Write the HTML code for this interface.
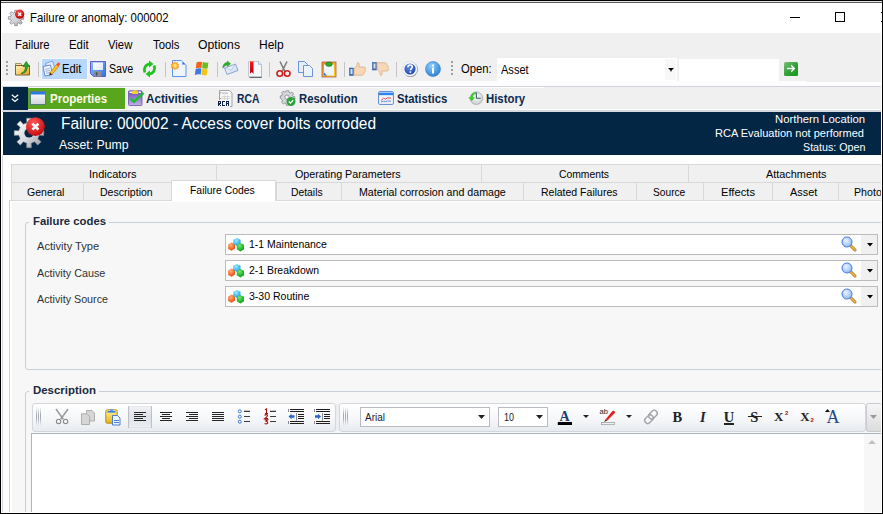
<!DOCTYPE html>
<html><head><meta charset="utf-8"><style>
html,body{margin:0;padding:0;}
body{width:883px;height:514px;position:relative;overflow:hidden;background:#fff;font-family:"Liberation Sans",sans-serif;}
.t{position:absolute;white-space:nowrap;}
svg{position:absolute;overflow:visible;}
</style></head><body>
<div style="position:absolute;left:0px;top:0px;width:883px;height:514px;background:#fff"></div>
<div style="position:absolute;left:0px;top:0px;width:883px;height:1px;background:#000"></div>
<div style="position:absolute;left:0px;top:1px;width:883px;height:1px;background:#e4e4e4"></div>
<div style="position:absolute;left:0px;top:2px;width:883px;height:1px;background:#5a5a5a"></div>
<svg style="left:7.5px;top:9.5px" width="17" height="16" viewBox="0 0 17 16">
<defs><linearGradient id="gg1" x1="0" y1="0" x2="1" y2="1"><stop offset="0" stop-color="#e4e6ec"/><stop offset="0.6" stop-color="#d0d2d8"/><stop offset="1" stop-color="#9a9ca2"/></linearGradient>
<radialGradient id="rr1" cx="0.4" cy="0.3" r="0.7"><stop offset="0" stop-color="#ff5050"/><stop offset="1" stop-color="#c00000"/></radialGradient></defs>
<path d="M6.74 2.54L6.72 0.31L9.28 0.31L9.26 2.54L10.96 3.25L12.54 1.65L14.35 3.46L12.75 5.04L13.46 6.74L15.69 6.72L15.69 9.28L13.46 9.26L12.75 10.96L14.35 12.54L12.54 14.35L10.96 12.75L9.26 13.46L9.28 15.69L6.72 15.69L6.74 13.46L5.04 12.75L3.46 14.35L1.65 12.54L3.25 10.96L2.54 9.26L0.31 9.28L0.31 6.72L2.54 6.74L3.25 5.04L1.65 3.46L3.46 1.65L5.04 3.25z" fill="url(#gg1)" stroke="#6a6c72" stroke-width="0.6"/>
<circle cx="11.7" cy="4.2" r="4.6" fill="url(#rr1)"/>
<path d="M10.2 2.7l3 3M13.2 2.7l-3 3" stroke="#fff" stroke-width="1.4"/>
</svg>
<div class="t" style="left:29.60px;top:11px;font-size:12.50px;line-height:14.37px;transform:scaleX(0.9109);transform-origin:0 0;color:#000;">Failure or anomaly: 000002</div>
<div style="position:absolute;left:790px;top:17px;width:10px;height:1px;background:#000"></div>
<div style="position:absolute;left:835px;top:12px;width:10px;height:10px;box-sizing:border-box;border:1px solid #000"></div>
<div style="position:absolute;left:2px;top:33px;width:880px;height:48px;background:#f0f0f0"></div>
<div class="t" style="left:15.40px;top:38px;font-size:12.50px;line-height:14.37px;transform:scaleX(0.9058);transform-origin:0 0;color:#000;">Failure</div>
<div class="t" style="left:69.30px;top:38px;font-size:12.50px;line-height:14.37px;transform:scaleX(0.9095);transform-origin:0 0;color:#000;">Edit</div>
<div class="t" style="left:108.40px;top:38px;font-size:12.50px;line-height:14.37px;transform:scaleX(0.9054);transform-origin:0 0;color:#000;">View</div>
<div class="t" style="left:152.50px;top:38px;font-size:12.50px;line-height:14.37px;transform:scaleX(0.9041);transform-origin:0 0;color:#000;">Tools</div>
<div class="t" style="left:198.00px;top:38px;font-size:12.50px;line-height:14.37px;transform:scaleX(0.9745);transform-origin:0 0;color:#000;">Options</div>
<div class="t" style="left:259.10px;top:38px;font-size:12.50px;line-height:14.37px;transform:scaleX(0.9611);transform-origin:0 0;color:#000;">Help</div>
<div style="position:absolute;left:2px;top:81px;width:880px;height:5px;background:#fdfdfd"></div>
<div style="position:absolute;left:2px;top:86px;width:880px;height:1px;background:#cfd4da"></div>
<div style="position:absolute;left:806px;top:81px;width:76px;height:0px;"></div>
<div style="position:absolute;left:6px;top:61px;width:2px;height:2px;background:#a0a0a0"></div>
<div style="position:absolute;left:6px;top:65px;width:2px;height:2px;background:#a0a0a0"></div>
<div style="position:absolute;left:6px;top:69px;width:2px;height:2px;background:#a0a0a0"></div>
<div style="position:absolute;left:6px;top:73px;width:2px;height:2px;background:#a0a0a0"></div>
<div style="position:absolute;left:451px;top:61px;width:2px;height:2px;background:#a0a0a0"></div>
<div style="position:absolute;left:451px;top:65px;width:2px;height:2px;background:#a0a0a0"></div>
<div style="position:absolute;left:451px;top:69px;width:2px;height:2px;background:#a0a0a0"></div>
<div style="position:absolute;left:451px;top:73px;width:2px;height:2px;background:#a0a0a0"></div>
<div style="position:absolute;left:38px;top:62px;width:1px;height:15px;background:#c4c4c4"></div>
<div style="position:absolute;left:165px;top:62px;width:1px;height:15px;background:#c4c4c4"></div>
<div style="position:absolute;left:217px;top:62px;width:1px;height:15px;background:#c4c4c4"></div>
<div style="position:absolute;left:269px;top:62px;width:1px;height:15px;background:#c4c4c4"></div>
<div style="position:absolute;left:344px;top:62px;width:1px;height:15px;background:#c4c4c4"></div>
<div style="position:absolute;left:396px;top:62px;width:1px;height:15px;background:#c4c4c4"></div>
<svg style="left:14px;top:60px" width="17" height="17" viewBox="0 0 17 17">
<defs><linearGradient id="fy" x1="0" y1="0" x2="1" y2="1"><stop offset="0" stop-color="#fff4c0"/><stop offset="0.5" stop-color="#f6d070"/><stop offset="1" stop-color="#e49a20"/></linearGradient></defs>
<path d="M1.5 3.5h5.5l1 1.5v1h-6.5z" fill="#f4e4a8" stroke="#8a7040" stroke-width="0.7"/>
<path d="M1.5 5.5h14v9.5h-14z" fill="url(#fy)" stroke="#5a4420" stroke-width="0.8"/>
<path d="M7 13.5C10 12.5 11.5 10 11.5 6.5H9L12.2 1.5 15.5 6.5H13.3C13.3 11 11.5 13.5 7 13.5z" fill="#26a826" stroke="#0f6a12" stroke-width="0.6"/>
</svg>
<div style="position:absolute;left:41px;top:58px;width:47px;height:22px;box-sizing:border-box;background:#b9d8fb;border:1px solid #f4f8fc"></div>
<svg style="left:42px;top:60px" width="18" height="17" viewBox="0 0 18 17">
<path d="M3.5 3.5l7-2.5 3 9-7 2.5z" fill="#e4ecf9" stroke="#6c8fd0" stroke-width="0.8"/>
<path d="M1 6.5l7.5-1.5 2 9.5L3 16z" fill="#f2f6fd" stroke="#5a80c8" stroke-width="0.9"/>
<path d="M3.2 9.3l4.5-.9M3.6 11.3l4.5-.9M4 13.3l4.5-.9" stroke="#8aa6d8" stroke-width="0.9"/>
<path d="M8 12.5l6.8-8.3 2.2 1.9-6.8 8.2-2.7.9z" fill="#f6c21a" stroke="#b07810" stroke-width="0.6"/>
<path d="M14.3 4.8l1.5-1.8c.6-.6 1.6-.5 2 .2.4.5.3 1.2-.1 1.6L16.3 6.6z" fill="#f0502a"/>
<path d="M8 12.5l-.6 2.8 2.7-.9z" fill="#3a2a10"/>
</svg>
<div class="t" style="left:62.40px;top:62px;font-size:12.50px;line-height:14.37px;transform:scaleX(0.8956);transform-origin:0 0;color:#000;">Edit</div>
<svg style="left:90px;top:61px" width="16" height="16" viewBox="0 0 16 16">
<defs><linearGradient id="fb" x1="0" y1="0" x2="1" y2="1"><stop offset="0" stop-color="#8cc4fc"/><stop offset="1" stop-color="#2f6ee0"/></linearGradient>
<linearGradient id="fl" x1="0" y1="0" x2="1" y2="1"><stop offset="0" stop-color="#ffffff"/><stop offset="1" stop-color="#dde6fb"/></linearGradient></defs>
<path d="M0.5 0.5h15v15H3.5L0.5 12.5z" fill="url(#fb)" stroke="#5a52c2" stroke-width="0.9"/>
<rect x="3" y="1.5" width="10" height="7.5" fill="url(#fl)"/>
<rect x="4.3" y="10.3" width="7" height="5.2" fill="#8d8f98"/>
<rect x="5.8" y="11.3" width="1.6" height="3.2" fill="#4a4a50"/>
</svg>
<div class="t" style="left:108.90px;top:62px;font-size:12.50px;line-height:14.37px;transform:scaleX(0.8526);transform-origin:0 0;color:#000;">Save</div>
<svg style="left:141px;top:61px" width="17" height="16" viewBox="0 0 17 16">
<path d="M4 11.5C2.3 8 4 3.3 9 2.8" fill="none" stroke="#1fc41f" stroke-width="2.8"/>
<path d="M8 -0.5L12.5 3 8 6.5z" fill="#1fc41f"/>
<path d="M13 4.5C14.7 8 13 12.7 8 13.2" fill="none" stroke="#1fc41f" stroke-width="2.8"/>
<path d="M9 9.5L4.5 13 9 16.5z" fill="#1fc41f"/>
</svg>
<svg style="left:171px;top:60px" width="17" height="17" viewBox="0 0 17 17">
<defs><radialGradient id="sun" cx="0.5" cy="0.5" r="0.5"><stop offset="0" stop-color="#fff8a0"/><stop offset="0.6" stop-color="#ffb020"/><stop offset="1" stop-color="#f06010"/></radialGradient></defs>
<path d="M1.5 0.5h9l4.5 4.5v11.5h-13.5z" fill="#eef5fe" stroke="#4a8ae4" stroke-width="0.9"/>
<path d="M10.5 0.5l4.5 4.5h-4.5z" fill="#d8e8fb"/>
<path d="M11.5 1.5l3 3h-3z" fill="#2a6ee0"/>
<path d="M4 1.2l.9 1.6 1.7-.7-.1 1.8 1.8.5-1.2 1.4 1.2 1.4-1.8.5.1 1.8-1.7-.7L4 10.4l-.9-1.6-1.7.7.1-1.8-1.8-.5 1.2-1.4L-.3 4.4l1.8-.5-.1-1.8 1.7.7z" fill="url(#sun)"/>
</svg>
<svg style="left:193px;top:61px" width="16" height="15" viewBox="0 0 16 15">
<path d="M3.6 1.2Q6 0.2 9.2 1L8.5 7Q5.6 6.3 2.8 7.3z" fill="#f2641c"/>
<path d="M9.8 1.1Q12.6 2 15.4 1.6L14.6 7.6Q11.8 8 9.1 7.1z" fill="#6cbc1c"/>
<path d="M2.7 7.9Q5.5 6.9 8.4 7.6L7.7 13.6Q5 12.9 1.8 13.9z" fill="#3a7ae8"/>
<path d="M9 7.7Q11.7 8.6 14.5 8.2L13.7 14.2Q11 14.6 8.3 13.7z" fill="#f4c414"/>
</svg>
<svg style="left:222px;top:61px" width="17" height="16" viewBox="0 0 17 16">
<defs><linearGradient id="env" x1="0" y1="0" x2="1" y2="1"><stop offset="0" stop-color="#ffffff"/><stop offset="1" stop-color="#c4d4f0"/></linearGradient></defs>
<path d="M2.5 7l11-4 2.5 6.5-11 4z" fill="url(#env)" stroke="#7a90c8" stroke-width="0.8"/>
<path d="M2.5 7l7 2.2 4-6.2" fill="none" stroke="#9ab0dc" stroke-width="0.6"/>
<path d="M0.8 7.2C0.8 3.5 2.8 1.5 5.5 1.5V0l3 2.8-3 2.8V4C4 4 2.5 5 0.8 7.2z" fill="#2cb02a" stroke="#1a7a1a" stroke-width="0.4"/>
</svg>
<svg style="left:247px;top:60.5px" width="17" height="17" viewBox="0 0 17 17">
<defs><linearGradient id="rb" x1="0" y1="0" x2="0" y2="1"><stop offset="0" stop-color="#ff1a1a"/><stop offset="1" stop-color="#b00010"/></linearGradient></defs>
<path d="M14.5 5v11.5H2.5" fill="none" stroke="#60646c" stroke-width="1"/>
<path d="M1.5 0.5h10l3 3v12h-13z" fill="#f6f8fc" stroke="#b8bcc6" stroke-width="0.8"/>
<path d="M11.5 0.5v3h3" fill="#cfe0f4" stroke="#8ab0e0" stroke-width="0.6"/>
<path d="M3 0.5h3.5v12.3l-1.75-1.8L3 12.8z" fill="url(#rb)"/>
</svg>
<svg style="left:276px;top:61px" width="15" height="16" viewBox="0 0 15 16">
<path d="M4 0.5l5 10M11 0.5l-5 10" stroke="#7d7d80" stroke-width="1.6"/>
<circle cx="3.8" cy="12.5" r="2.8" fill="none" stroke="#d21a1a" stroke-width="1.6"/>
<circle cx="11.2" cy="12.5" r="2.8" fill="none" stroke="#d21a1a" stroke-width="1.6"/>
</svg>
<svg style="left:298px;top:61px" width="16" height="16" viewBox="0 0 16 16">
<path d="M0.5 0.5h6l3 3v8h-9z" fill="#e6eefa" stroke="#5a8ad6" stroke-width="0.9"/>
<path d="M5.5 4.5h6l3 3v8h-9z" fill="#eef3fb" stroke="#5a8ad6" stroke-width="0.9"/>
</svg>
<svg style="left:321px;top:60.5px" width="16" height="17" viewBox="0 0 16 17">
<defs><linearGradient id="cbo" x1="0" y1="0" x2="1" y2="1"><stop offset="0" stop-color="#f08a10"/><stop offset="1" stop-color="#f8d020"/></linearGradient></defs>
<rect x="1" y="1" width="14" height="15" fill="url(#cbo)" stroke="#b06050" stroke-width="0.8"/>
<path d="M3 3.5h10v11H3z" fill="#eef4fc"/>
<path d="M3 11.5v3h3z" fill="#2a70e0"/>
<ellipse cx="8" cy="3.2" rx="3.2" ry="2.2" fill="#28b028" stroke="#1a5a1a" stroke-width="0.5"/>
</svg>
<svg style="left:349px;top:62px" width="18" height="14" viewBox="0 0 18 14">
<rect x="0.5" y="6" width="4" height="7.5" fill="#3b6fb8" stroke="#2a4f90" stroke-width="0.5"/>
<rect x="1.5" y="7" width="2" height="5" fill="#cfe0f6"/>
<path d="M5 6.5c2-1 3-3 3.5-6 1.5 0 2 1.5 1.5 4.5h5c1.5 0 2 2 1 3 .6 1 0 2.5-1 2.8 0 1.2-.8 2.4-2 2.4H5z" fill="#f6d8b8" stroke="#d8a878" stroke-width="0.7"/>
</svg>
<svg style="left:372px;top:62px" width="18" height="14" viewBox="0 0 18 14">
<rect x="0.5" y="0.5" width="4" height="7.5" fill="#3b6fb8" stroke="#2a4f90" stroke-width="0.5"/>
<rect x="1.5" y="1.5" width="2" height="5" fill="#cfe0f6"/>
<path d="M5 7.5c2 1 3 3 3.5 6 1.5 0 2-1.5 1.5-4.5h5c1.5 0 2-2 1-3 .6-1 0-2.5-1-2.8 0-1.2-.8-2.4-2-2.4H5z" fill="#f6d8b8" stroke="#d8a878" stroke-width="0.7"/>
</svg>
<svg style="left:402px;top:61px" width="16" height="16" viewBox="0 0 16 16">
<defs><radialGradient id="hb" cx="0.4" cy="0.3" r="0.8"><stop offset="0" stop-color="#5c8ee8"/><stop offset="1" stop-color="#1a3ea8"/></radialGradient></defs>
<circle cx="8.4" cy="8.4" r="7.4" fill="#6a6a70"/>
<circle cx="8" cy="8" r="7.3" fill="#fafcff" stroke="#c8d0dc" stroke-width="0.5"/>
<circle cx="8" cy="8" r="5.6" fill="url(#hb)"/>
<path d="M5.9 6.3c0-1.4 1-2.2 2.2-2.2s2.2.8 2.2 2c0 1.5-1.8 1.6-1.8 3.2" fill="none" stroke="#fff" stroke-width="1.5"/>
<rect x="7.6" y="10.3" width="1.6" height="1.6" fill="#fff"/>
</svg>
<svg style="left:425px;top:61px" width="16" height="16" viewBox="0 0 16 16">
<defs><radialGradient id="ib" cx="0.4" cy="0.3" r="0.8"><stop offset="0" stop-color="#8fd0fa"/><stop offset="1" stop-color="#1e78d0"/></radialGradient></defs>
<circle cx="8" cy="8" r="7.5" fill="url(#ib)" stroke="#3a7cc8" stroke-width="0.6"/>
<rect x="7" y="6.5" width="2" height="6" fill="#fff"/><rect x="7" y="3.5" width="2" height="2" fill="#fff"/>
</svg>
<div class="t" style="left:460.50px;top:62px;font-size:12.50px;line-height:14.37px;transform:scaleX(0.8987);transform-origin:0 0;color:#000;">Open:</div>
<div style="position:absolute;left:497px;top:58px;width:180px;height:23px;background:#fff"></div>
<div style="position:absolute;left:665px;top:59px;width:11px;height:21px;background:#f8f8f8"></div>
<svg style="left:667.5px;top:67.5px" width="6" height="4" viewBox="0 0 6 4"><path d="M0 0h6L3.5 2.6V3.6h-1V2.6z" fill="#000"/></svg>
<div class="t" style="left:501.30px;top:63px;font-size:12.50px;line-height:14.37px;transform:scaleX(0.8832);transform-origin:0 0;color:#000;">Asset</div>
<div style="position:absolute;left:679px;top:59px;width:100px;height:22px;background:#fff"></div>
<svg style="left:784px;top:62px" width="14" height="14" viewBox="0 0 14 14">
<defs><linearGradient id="gb" x1="0" y1="0" x2="1" y2="1"><stop offset="0" stop-color="#78c078"/><stop offset="0.5" stop-color="#36a03a"/><stop offset="1" stop-color="#0c9c14"/></linearGradient></defs>
<rect x="0" y="0" width="14" height="14" rx="1.5" fill="url(#gb)"/>
<path d="M3 6.5h7M7.2 3.2L10.4 6.5 7.2 9.8" fill="none" stroke="#fff" stroke-width="1.3"/>
</svg>
<div style="position:absolute;left:2px;top:87px;width:879px;height:22px;background:#f0f0f0"></div>
<div style="position:absolute;left:2px;top:109px;width:879px;height:1px;background:#fcfcfc"></div>
<div style="position:absolute;left:2px;top:110px;width:880px;height:2px;background:#d5d9dd"></div>
<div style="position:absolute;left:28px;top:87px;width:516px;height:1px;background:#fdfdfd"></div>
<div style="position:absolute;left:806px;top:81px;width:75px;height:1px;background:#f0f0f0"></div>
<div style="position:absolute;left:3px;top:87px;width:25px;height:23px;background:#022643"></div>
<svg style="left:11px;top:94px" width="8" height="9" viewBox="0 0 8 9"><path d="M0.8 0.8L4 3.5 7.2 0.8M0.8 4.8L4 7.5 7.2 4.8" fill="none" stroke="#fff" stroke-width="1.3"/></svg>
<div style="position:absolute;left:28px;top:87px;width:97px;height:1px;background:#f4f8f0"></div>
<div style="position:absolute;left:28px;top:88px;width:97px;height:21px;background:#58a61e"></div>
<svg style="left:30px;top:91px" width="16" height="14" viewBox="0 0 16 14">
<defs><linearGradient id="pw" x1="0" y1="0" x2="0" y2="1"><stop offset="0" stop-color="#ffffff"/><stop offset="1" stop-color="#d0d4dc"/></linearGradient></defs>
<rect x="0.5" y="0.5" width="15" height="13" fill="url(#pw)" stroke="#4a6a8a" stroke-width="0.8"/>
<rect x="1" y="1" width="14" height="2.5" fill="#2a7be0"/>
</svg>
<div class="t" style="left:49.70px;top:92px;font-size:12.50px;line-height:14.37px;transform:scaleX(0.9232);transform-origin:0 0;font-weight:bold;color:#fffbe8;">Properties</div>
<svg style="left:128px;top:90px" width="17" height="16" viewBox="0 0 17 16">
<defs><linearGradient id="pu" x1="0" y1="0" x2="0" y2="1"><stop offset="0" stop-color="#6a4cb8"/><stop offset="1" stop-color="#c4b0e0"/></linearGradient></defs>
<rect x="0.5" y="0.8" width="13.5" height="14.7" rx="1" fill="url(#pu)" stroke="#6a50b0" stroke-width="0.8"/>
<rect x="1.5" y="1.5" width="2.5" height="1.5" fill="#fff"/><rect x="10.5" y="1.5" width="2.5" height="1.5" fill="#fff"/>
<path d="M4 1.5Q4 0.2 7 0.2T10 1.5V4H4z" fill="#f6d030"/>
<path d="M2.5 8.5L6 11.8 15.5 2.8" fill="none" stroke="#18c030" stroke-width="2.4"/>
</svg>
<div class="t" style="left:146.00px;top:92px;font-size:12.50px;line-height:14.37px;transform:scaleX(0.9353);transform-origin:0 0;font-weight:bold;color:#0c2a4c;">Activities</div>
<svg style="left:217px;top:90px" width="17" height="17" viewBox="0 0 17 17">
<path d="M2.5 0.5h10l2.5 2.5v13.5h-12.5z" fill="#f6f6f6" stroke="#9a9a9a" stroke-width="0.9"/>
<rect x="5" y="2.5" width="6" height="1.5" fill="#c8c8c8"/>
<path d="M5 6.5h8M5 8.5h8M5 10.5h8M7.5 5.5v6M10.5 5.5v6" stroke="#d0d0d0" stroke-width="0.8"/>
<circle cx="3.8" cy="2.8" r="0.6" fill="#777"/><circle cx="3.8" cy="8.5" r="0.6" fill="#777"/>
<rect x="0" y="10" width="13" height="7" fill="#f4f4f4"/>
<g fill="#0c2240"><rect x="1" y="11" width="1" height="1"/><rect x="2" y="11" width="1" height="1"/><rect x="3" y="11" width="1" height="1"/><rect x="1" y="12" width="1" height="1"/><rect x="3" y="12" width="1" height="1"/><rect x="1" y="13" width="1" height="1"/><rect x="2" y="13" width="1" height="1"/><rect x="3" y="13" width="1" height="1"/><rect x="1" y="14" width="1" height="1"/><rect x="2" y="14" width="1" height="1"/><rect x="1" y="15" width="1" height="1"/><rect x="3" y="15" width="1" height="1"/><rect x="5" y="11" width="1" height="1"/><rect x="6" y="11" width="1" height="1"/><rect x="7" y="11" width="1" height="1"/><rect x="5" y="12" width="1" height="1"/><rect x="5" y="13" width="1" height="1"/><rect x="5" y="14" width="1" height="1"/><rect x="5" y="15" width="1" height="1"/><rect x="6" y="15" width="1" height="1"/><rect x="7" y="15" width="1" height="1"/><rect x="9" y="11" width="1" height="1"/><rect x="10" y="11" width="1" height="1"/><rect x="11" y="11" width="1" height="1"/><rect x="9" y="12" width="1" height="1"/><rect x="11" y="12" width="1" height="1"/><rect x="9" y="13" width="1" height="1"/><rect x="10" y="13" width="1" height="1"/><rect x="11" y="13" width="1" height="1"/><rect x="9" y="14" width="1" height="1"/><rect x="11" y="14" width="1" height="1"/><rect x="9" y="15" width="1" height="1"/><rect x="11" y="15" width="1" height="1"/></g>
</svg>
<div class="t" style="left:237.40px;top:92px;font-size:12.50px;line-height:14.37px;transform:scaleX(0.8266);transform-origin:0 0;font-weight:bold;color:#0c2a4c;">RCA</div>
<svg style="left:280px;top:90px" width="16" height="16" viewBox="0 0 16 16">
<path d="M6 0.8h2.6l.4 1.8 1.5.7 1.6-1 1.8 1.8-1 1.6.6 1.5 1.9.4v2.6l-1.9.4-.6 1.5 1 1.6-1.8 1.8-1.6-1-1.5.6-.4 1.9H6l-.4-1.9-1.5-.6-1.6 1-1.8-1.8 1-1.6-.6-1.5L-.8 9.2V6.6l1.9-.4.6-1.5-1-1.6L2.5 1.3l1.6 1 1.5-.7z" transform="translate(1,0) scale(0.9)" fill="#d4d6da" stroke="#6a6e76" stroke-width="0.7"/>
<circle cx="7" cy="7.3" r="2.2" fill="#f0f0f0" stroke="#6a6e76" stroke-width="0.6"/>
<circle cx="11" cy="11.5" r="4.5" fill="#2ea43a"/>
<path d="M8.8 11.5l1.6 1.6 2.8-3" fill="none" stroke="#fff" stroke-width="1.3"/>
</svg>
<div class="t" style="left:299.20px;top:92px;font-size:12.50px;line-height:14.37px;transform:scaleX(0.9071);transform-origin:0 0;font-weight:bold;color:#0c2a4c;">Resolution</div>
<svg style="left:378px;top:91px" width="16" height="14" viewBox="0 0 16 14">
<defs><linearGradient id="sb" x1="0" y1="0" x2="0" y2="1"><stop offset="0" stop-color="#a8d0ff"/><stop offset="0.5" stop-color="#1a78f0"/><stop offset="1" stop-color="#3a90f8"/></linearGradient></defs>
<rect x="0.6" y="0.6" width="14.8" height="12.8" rx="1.2" fill="#f8fafe" stroke="#4a7ad0" stroke-width="0.9"/>
<rect x="1" y="1.2" width="14" height="3" fill="url(#sb)"/>
<rect x="2.5" y="5.5" width="11" height="6.5" fill="#eef2f8"/>
<path d="M3 9.5l2.5-2.2 2 .8 2-1.2 3.5.2" fill="none" stroke="#e03a3a" stroke-width="0.9"/>
<path d="M3 11l2.5-.8 2 .4 2-.6 3.5.1" fill="none" stroke="#3a78d8" stroke-width="0.8"/>
</svg>
<div class="t" style="left:397.10px;top:92px;font-size:12.50px;line-height:14.37px;transform:scaleX(0.9029);transform-origin:0 0;font-weight:bold;color:#0c2a4c;">Statistics</div>
<svg style="left:466px;top:90px" width="18" height="16" viewBox="0 0 18 16">
<defs><radialGradient id="cl" cx="0.5" cy="0.4" r="0.6"><stop offset="0" stop-color="#ffffff"/><stop offset="1" stop-color="#c8ccd0"/></radialGradient></defs>
<circle cx="10.4" cy="8.2" r="6.3" fill="url(#cl)" stroke="#a8acb0" stroke-width="0.8"/>
<path d="M10.4 2.5V8.3h4.3" fill="none" stroke="#4a5a6a" stroke-width="1.1"/>
<path d="M10 2.2C6.5 2.2 4.8 4.5 4.6 7.2H2.2L5.8 11.2 9 7.2H6.8C7 5.5 8 4.2 10 3.8z" fill="#3ccc2a"/>
</svg>
<div class="t" style="left:486.40px;top:92px;font-size:12.50px;line-height:14.37px;transform:scaleX(0.9082);transform-origin:0 0;font-weight:bold;color:#0c2a4c;">History</div>
<div style="position:absolute;left:3px;top:112px;width:880px;height:43px;background:#022643"></div>
<svg style="left:14px;top:117px" width="32" height="32" viewBox="0 0 32 32">
<defs><linearGradient id="hg" x1="0" y1="0" x2="1" y2="1"><stop offset="0" stop-color="#ffffff"/><stop offset="0.55" stop-color="#d8dadd"/><stop offset="1" stop-color="#8e9298"/></linearGradient>
<radialGradient id="hr" cx="0.4" cy="0.3" r="0.75"><stop offset="0" stop-color="#ff5a5a"/><stop offset="1" stop-color="#c00808"/></radialGradient></defs>
<path d="M12.75 5.74L12.54 1.20L17.46 1.20L17.25 5.74L20.66 7.16L23.72 3.80L27.20 7.28L23.84 10.34L25.26 13.75L29.80 13.54L29.80 18.46L25.26 18.25L23.84 21.66L27.20 24.72L23.72 28.20L20.66 24.84L17.25 26.26L17.46 30.80L12.54 30.80L12.75 26.26L9.34 24.84L6.28 28.20L2.80 24.72L6.16 21.66L4.74 18.25L0.20 18.46L0.20 13.54L4.74 13.75L6.16 10.34L2.80 7.28L6.28 3.80L9.34 7.16z" fill="url(#hg)" stroke="#7a7e86" stroke-width="0.5"/>
<circle cx="15" cy="16" r="4.6" fill="#032442"/>
<circle cx="21.4" cy="9.6" r="9.4" fill="url(#hr)"/>
<path d="M18.4 6.6l6 6M24.4 6.6l-6 6" stroke="#fff" stroke-width="2.6"/>
</svg>
<div class="t" style="left:61.00px;top:115px;font-size:16.00px;line-height:18.40px;transform:scaleX(0.9677);transform-origin:0 0;color:#fff;">Failure: 000002 - Access cover bolts corroded</div>
<div class="t" style="left:59.30px;top:139px;font-size:12.00px;line-height:13.80px;transform:scaleX(1.0242);transform-origin:0 0;color:#fff;">Asset: Pump</div>
<div class="t" style="left:774.60px;top:113px;font-size:11.00px;line-height:12.65px;transform:scaleX(1.0303);transform-origin:0 0;color:#fff;">Northern Location</div>
<div class="t" style="left:715.40px;top:127px;font-size:11.00px;line-height:12.65px;transform:scaleX(1.0027);transform-origin:0 0;color:#fff;">RCA Evaluation not performed</div>
<div class="t" style="left:802.60px;top:141px;font-size:11.00px;line-height:12.65px;transform:scaleX(0.9720);transform-origin:0 0;color:#fff;">Status: Open</div>
<div style="position:absolute;left:11px;top:164px;width:870px;height:37px;background:#f0f0f0"></div>
<div style="position:absolute;left:11px;top:164px;width:870px;height:1px;background:#d9d9d9"></div>
<div style="position:absolute;left:11px;top:182px;width:870px;height:1px;background:#d9d9d9"></div>
<div style="position:absolute;left:11px;top:164px;width:1px;height:37px;background:#d9d9d9"></div>
<div style="position:absolute;left:216px;top:164px;width:1px;height:18px;background:#d9d9d9"></div>
<div style="position:absolute;left:481px;top:164px;width:1px;height:18px;background:#d9d9d9"></div>
<div style="position:absolute;left:688px;top:164px;width:1px;height:18px;background:#d9d9d9"></div>
<div style="position:absolute;left:83px;top:182px;width:1px;height:18px;background:#d9d9d9"></div>
<div style="position:absolute;left:171px;top:182px;width:1px;height:18px;background:#d9d9d9"></div>
<div style="position:absolute;left:276px;top:182px;width:1px;height:18px;background:#d9d9d9"></div>
<div style="position:absolute;left:341px;top:182px;width:1px;height:18px;background:#d9d9d9"></div>
<div style="position:absolute;left:523px;top:182px;width:1px;height:18px;background:#d9d9d9"></div>
<div style="position:absolute;left:636px;top:182px;width:1px;height:18px;background:#d9d9d9"></div>
<div style="position:absolute;left:703px;top:182px;width:1px;height:18px;background:#d9d9d9"></div>
<div style="position:absolute;left:772px;top:182px;width:1px;height:18px;background:#d9d9d9"></div>
<div style="position:absolute;left:838px;top:182px;width:1px;height:18px;background:#d9d9d9"></div>
<div class="t" style="left:89.00px;top:168px;font-size:11.50px;line-height:13.22px;transform:scaleX(0.9549);transform-origin:0 0;color:#000;">Indicators</div>
<div class="t" style="left:294.80px;top:168px;font-size:11.50px;line-height:13.22px;transform:scaleX(0.9333);transform-origin:0 0;color:#000;">Operating Parameters</div>
<div class="t" style="left:558.50px;top:168px;font-size:11.50px;line-height:13.22px;transform:scaleX(0.8993);transform-origin:0 0;color:#000;">Comments</div>
<div class="t" style="left:765.80px;top:168px;font-size:11.50px;line-height:13.22px;transform:scaleX(0.9468);transform-origin:0 0;color:#000;">Attachments</div>
<div class="t" style="left:27.20px;top:186px;font-size:11.50px;line-height:13.22px;transform:scaleX(0.9144);transform-origin:0 0;color:#000;">General</div>
<div class="t" style="left:100.20px;top:186px;font-size:11.50px;line-height:13.22px;transform:scaleX(0.9165);transform-origin:0 0;color:#000;">Description</div>
<div class="t" style="left:290.70px;top:186px;font-size:11.50px;line-height:13.22px;transform:scaleX(0.8990);transform-origin:0 0;color:#000;">Details</div>
<div class="t" style="left:358.50px;top:186px;font-size:11.50px;line-height:13.22px;transform:scaleX(0.9259);transform-origin:0 0;color:#000;">Material corrosion and damage</div>
<div class="t" style="left:540.50px;top:186px;font-size:11.50px;line-height:13.22px;transform:scaleX(0.9134);transform-origin:0 0;color:#000;">Related Failures</div>
<div class="t" style="left:652.70px;top:186px;font-size:11.50px;line-height:13.22px;transform:scaleX(0.8861);transform-origin:0 0;color:#000;">Source</div>
<div class="t" style="left:720.60px;top:186px;font-size:11.50px;line-height:13.22px;transform:scaleX(0.9728);transform-origin:0 0;color:#000;">Effects</div>
<div class="t" style="left:789.60px;top:186px;font-size:11.50px;line-height:13.22px;transform:scaleX(0.9461);transform-origin:0 0;color:#000;">Asset</div>
<div class="t" style="left:854.20px;top:186px;font-size:11.50px;line-height:13.22px;transform:scaleX(0.9251);transform-origin:0 0;color:#000;">Photo</div>
<div style="position:absolute;left:9px;top:200px;width:873px;height:314px;box-sizing:border-box;background:#f7f7f7;border-left:1px solid #d0d0d0;border-top:1px solid #d9d9d9"></div>
<div style="position:absolute;left:10px;top:201px;width:2px;height:313px;background:#fff"></div>
<div style="position:absolute;left:10px;top:201px;width:872px;height:1px;background:#fff"></div>
<div style="position:absolute;left:171px;top:180px;width:105px;height:21px;box-sizing:border-box;background:#fff;border:1px solid #d9d9d9;border-bottom:none"></div>
<div class="t" style="left:189.80px;top:184px;font-size:11.50px;line-height:13.22px;transform:scaleX(0.9036);transform-origin:0 0;color:#000;">Failure Codes</div>
<div style="position:absolute;left:25px;top:222px;width:870px;height:148px;box-sizing:border-box;border:1px solid #c8cfd6;border-radius:3px"></div>
<div style="position:absolute;left:29px;top:215px;width:80px;height:12px;background:#f7f7f7"></div>
<div class="t" style="left:32.70px;top:215px;font-size:11.50px;line-height:13.22px;transform:scaleX(0.9845);transform-origin:0 0;font-weight:bold;color:#1b2a3c;">Failure codes</div>
<div class="t" style="left:37.00px;top:240px;font-size:11.50px;line-height:13.22px;transform:scaleX(0.9666);transform-origin:0 0;color:#333;">Activity Type</div>
<div class="t" style="left:37.00px;top:267px;font-size:11.50px;line-height:13.22px;transform:scaleX(0.9375);transform-origin:0 0;color:#333;">Activity Cause</div>
<div class="t" style="left:37.00px;top:293px;font-size:11.50px;line-height:13.22px;transform:scaleX(0.9336);transform-origin:0 0;color:#333;">Activity Source</div>
<div style="position:absolute;left:225px;top:234px;width:653px;height:21px;box-sizing:border-box;background:#fff;border:1px solid #bcbcbc"></div>
<div style="position:absolute;left:861px;top:235px;width:16px;height:19px;background:#f0f0f0"></div>
<svg style="left:866.5px;top:243px" width="6" height="4" viewBox="0 0 6 4"><path d="M0 0h6L3 3.4z" fill="#000"/></svg>
<svg style="left:841px;top:236px" width="16" height="16" viewBox="0 0 16 16">
<defs><radialGradient id="mg0" cx="0.4" cy="0.35" r="0.7"><stop offset="0" stop-color="#eaf4ff"/><stop offset="1" stop-color="#8ab8f4"/></radialGradient></defs>
<path d="M9.5 9.5l4.5 4.5" stroke="#a8741a" stroke-width="3" stroke-linecap="round"/>
<path d="M9.5 9.5l4.5 4.5" stroke="#f0b848" stroke-width="1.6" stroke-linecap="round"/>
<circle cx="6" cy="6" r="5" fill="url(#mg0)" stroke="#4a78e0" stroke-width="1"/>
</svg>
<svg style="left:225px;top:234px" width="22" height="20" viewBox="0 0 22 20">
<defs><radialGradient id="co0" cx="0.4" cy="0.3" r="0.7"><stop offset="0" stop-color="#ffb070"/><stop offset="1" stop-color="#e84a10"/></radialGradient>
<radialGradient id="cb0" cx="0.4" cy="0.3" r="0.7"><stop offset="0" stop-color="#a0ecff"/><stop offset="1" stop-color="#18a0e8"/></radialGradient>
<radialGradient id="cg0" cx="0.4" cy="0.3" r="0.7"><stop offset="0" stop-color="#70e870"/><stop offset="1" stop-color="#08a018"/></radialGradient></defs>
<path d="M6.6 8.6l3.4 1.6v4.4l-3.4 2.2-3.4-1.8v-4.6z" fill="url(#co0)"/>
<path d="M11.9 3.9l3.6 1.8v4.4l-3.6 2-3.6-2V5.7z" fill="url(#cb0)"/>
<path d="M15.4 9l3.6 1.8v4.4l-3.6 2.2-3.6-2.2v-4.4z" fill="url(#cg0)"/>
</svg>
<div class="t" style="left:248.90px;top:238px;font-size:11.50px;line-height:13.22px;transform:scaleX(0.9095);transform-origin:0 0;color:#000;">1-1 Maintenance</div>
<div style="position:absolute;left:225px;top:260px;width:653px;height:21px;box-sizing:border-box;background:#fff;border:1px solid #bcbcbc"></div>
<div style="position:absolute;left:861px;top:261px;width:16px;height:19px;background:#f0f0f0"></div>
<svg style="left:866.5px;top:269px" width="6" height="4" viewBox="0 0 6 4"><path d="M0 0h6L3 3.4z" fill="#000"/></svg>
<svg style="left:841px;top:262px" width="16" height="16" viewBox="0 0 16 16">
<defs><radialGradient id="mg1" cx="0.4" cy="0.35" r="0.7"><stop offset="0" stop-color="#eaf4ff"/><stop offset="1" stop-color="#8ab8f4"/></radialGradient></defs>
<path d="M9.5 9.5l4.5 4.5" stroke="#a8741a" stroke-width="3" stroke-linecap="round"/>
<path d="M9.5 9.5l4.5 4.5" stroke="#f0b848" stroke-width="1.6" stroke-linecap="round"/>
<circle cx="6" cy="6" r="5" fill="url(#mg1)" stroke="#4a78e0" stroke-width="1"/>
</svg>
<svg style="left:225px;top:260px" width="22" height="20" viewBox="0 0 22 20">
<defs><radialGradient id="co1" cx="0.4" cy="0.3" r="0.7"><stop offset="0" stop-color="#ffb070"/><stop offset="1" stop-color="#e84a10"/></radialGradient>
<radialGradient id="cb1" cx="0.4" cy="0.3" r="0.7"><stop offset="0" stop-color="#a0ecff"/><stop offset="1" stop-color="#18a0e8"/></radialGradient>
<radialGradient id="cg1" cx="0.4" cy="0.3" r="0.7"><stop offset="0" stop-color="#70e870"/><stop offset="1" stop-color="#08a018"/></radialGradient></defs>
<path d="M6.6 8.6l3.4 1.6v4.4l-3.4 2.2-3.4-1.8v-4.6z" fill="url(#co1)"/>
<path d="M11.9 3.9l3.6 1.8v4.4l-3.6 2-3.6-2V5.7z" fill="url(#cb1)"/>
<path d="M15.4 9l3.6 1.8v4.4l-3.6 2.2-3.6-2.2v-4.4z" fill="url(#cg1)"/>
</svg>
<div class="t" style="left:248.90px;top:264px;font-size:11.50px;line-height:13.22px;transform:scaleX(0.9050);transform-origin:0 0;color:#000;">2-1 Breakdown</div>
<div style="position:absolute;left:225px;top:286px;width:653px;height:21px;box-sizing:border-box;background:#fff;border:1px solid #bcbcbc"></div>
<div style="position:absolute;left:861px;top:287px;width:16px;height:19px;background:#f0f0f0"></div>
<svg style="left:866.5px;top:295px" width="6" height="4" viewBox="0 0 6 4"><path d="M0 0h6L3 3.4z" fill="#000"/></svg>
<svg style="left:841px;top:288px" width="16" height="16" viewBox="0 0 16 16">
<defs><radialGradient id="mg2" cx="0.4" cy="0.35" r="0.7"><stop offset="0" stop-color="#eaf4ff"/><stop offset="1" stop-color="#8ab8f4"/></radialGradient></defs>
<path d="M9.5 9.5l4.5 4.5" stroke="#a8741a" stroke-width="3" stroke-linecap="round"/>
<path d="M9.5 9.5l4.5 4.5" stroke="#f0b848" stroke-width="1.6" stroke-linecap="round"/>
<circle cx="6" cy="6" r="5" fill="url(#mg2)" stroke="#4a78e0" stroke-width="1"/>
</svg>
<svg style="left:225px;top:286px" width="22" height="20" viewBox="0 0 22 20">
<defs><radialGradient id="co2" cx="0.4" cy="0.3" r="0.7"><stop offset="0" stop-color="#ffb070"/><stop offset="1" stop-color="#e84a10"/></radialGradient>
<radialGradient id="cb2" cx="0.4" cy="0.3" r="0.7"><stop offset="0" stop-color="#a0ecff"/><stop offset="1" stop-color="#18a0e8"/></radialGradient>
<radialGradient id="cg2" cx="0.4" cy="0.3" r="0.7"><stop offset="0" stop-color="#70e870"/><stop offset="1" stop-color="#08a018"/></radialGradient></defs>
<path d="M6.6 8.6l3.4 1.6v4.4l-3.4 2.2-3.4-1.8v-4.6z" fill="url(#co2)"/>
<path d="M11.9 3.9l3.6 1.8v4.4l-3.6 2-3.6-2V5.7z" fill="url(#cb2)"/>
<path d="M15.4 9l3.6 1.8v4.4l-3.6 2.2-3.6-2.2v-4.4z" fill="url(#cg2)"/>
</svg>
<div class="t" style="left:248.90px;top:290px;font-size:11.50px;line-height:13.22px;transform:scaleX(0.9157);transform-origin:0 0;color:#000;">3-30 Routine</div>
<div style="position:absolute;left:25px;top:391px;width:870px;height:140px;box-sizing:border-box;border:1px solid #c8cfd6;border-radius:3px"></div>
<div style="position:absolute;left:29px;top:384px;width:70px;height:12px;background:#f7f7f7"></div>
<div class="t" style="left:32.90px;top:384px;font-size:11.50px;line-height:13.22px;transform:scaleX(0.9945);transform-origin:0 0;font-weight:bold;color:#1b2a3c;">Description</div>
<div style="position:absolute;left:32px;top:403px;width:304px;height:29px;box-sizing:border-box;background:linear-gradient(#ffffff,#f4f6f8 60%,#e8ebef);border:1px solid #d3d7dc;border-radius:3px"></div>
<div style="position:absolute;left:339px;top:403px;width:527px;height:29px;box-sizing:border-box;background:linear-gradient(#ffffff,#f4f6f8 60%,#e8ebef);border:1px solid #d3d7dc;border-radius:3px"></div>
<div style="position:absolute;left:866px;top:403px;width:16px;height:29px;box-sizing:border-box;background:linear-gradient(#f6f6f6,#dcdcdc);border:1px solid #c8ccd0;border-radius:2px"></div>
<svg style="left:870px;top:415px" width="7" height="4" viewBox="0 0 7 4"><path d="M0 0h7L3.5 4z" fill="#9a9a9a"/></svg>
<div style="position:absolute;left:336px;top:404px;width:3px;height:27px;background:#eceef1"></div>
<div style="position:absolute;left:36px;top:407px;width:1px;height:19px;background:linear-gradient(rgba(160,164,172,0),#a8acb4 40%,#a8acb4 60%,rgba(160,164,172,0))"></div>
<div style="position:absolute;left:38px;top:407px;width:1px;height:19px;background:linear-gradient(rgba(160,164,172,0),#a8acb4 40%,#a8acb4 60%,rgba(160,164,172,0))"></div>
<div style="position:absolute;left:40px;top:407px;width:1px;height:19px;background:linear-gradient(rgba(160,164,172,0),#a8acb4 40%,#a8acb4 60%,rgba(160,164,172,0))"></div>
<div style="position:absolute;left:343px;top:407px;width:1px;height:19px;background:linear-gradient(rgba(160,164,172,0),#a8acb4 40%,#a8acb4 60%,rgba(160,164,172,0))"></div>
<div style="position:absolute;left:345px;top:407px;width:1px;height:19px;background:linear-gradient(rgba(160,164,172,0),#a8acb4 40%,#a8acb4 60%,rgba(160,164,172,0))"></div>
<div style="position:absolute;left:347px;top:407px;width:1px;height:19px;background:linear-gradient(rgba(160,164,172,0),#a8acb4 40%,#a8acb4 60%,rgba(160,164,172,0))"></div>
<div style="position:absolute;left:128px;top:406px;width:24px;height:22px;background:linear-gradient(#f2f3f6,#dfe2e8 50%,#eceef2);box-shadow:inset 1px 0 1px #b8bcc6,inset -1px 0 1px #b8bcc6"></div>
<svg style="left:54px;top:408px" width="16" height="17" viewBox="0 0 16 17">
<path d="M2 1L9.3 11.2M14 1L6.7 11.2" stroke="#9a9a9a" stroke-width="1.5"/>
<circle cx="4.6" cy="13.4" r="2.2" fill="none" stroke="#8a8a8a" stroke-width="1.1"/>
<circle cx="11.6" cy="13.4" r="2.2" fill="none" stroke="#8a8a8a" stroke-width="1.1"/>
</svg>
<svg style="left:81px;top:410px" width="15" height="15" viewBox="0 0 15 15">
<path d="M5.5 0.5h5.5l2.5 2.5v8h-8z" fill="#d6d6d6" stroke="#a8a8a8" stroke-width="0.9"/>
<path d="M0.5 3.8h5.5l2.5 2.5v8.2h-8z" fill="#d6d6d6" stroke="#a8a8a8" stroke-width="0.9"/>
</svg>
<svg style="left:105px;top:409px" width="18" height="17" viewBox="0 0 18 17">
<defs><linearGradient id="pg" x1="0" y1="0" x2="0" y2="1"><stop offset="0" stop-color="#fff0a0"/><stop offset="1" stop-color="#e8b418"/></linearGradient></defs>
<rect x="0.8" y="0.8" width="11.4" height="13.4" rx="1.5" fill="url(#pg)" stroke="#b07a0a" stroke-width="0.9"/>
<path d="M2.5 2h8v1.6h-8z" fill="#3a80d8"/><path d="M5 0.3h3v1.8H5z" fill="#5aa0e8"/>
<path d="M7.5 6.5h5l2.5 2.5v7h-7.5z" fill="#eef4fc" stroke="#3a74c8" stroke-width="0.9"/>
<path d="M9 11.5h5M9 13.5h5" stroke="#3a74c8" stroke-width="0.9"/>
</svg>
<div style="position:absolute;left:134px;top:412px;width:12px;height:1px;background:#262626"></div>
<div style="position:absolute;left:134px;top:414px;width:9px;height:1px;background:#262626"></div>
<div style="position:absolute;left:134px;top:416px;width:12px;height:1px;background:#262626"></div>
<div style="position:absolute;left:134px;top:418px;width:9px;height:1px;background:#262626"></div>
<div style="position:absolute;left:134px;top:420px;width:12px;height:1px;background:#262626"></div>
<div style="position:absolute;left:160px;top:412px;width:12px;height:1px;background:#262626"></div>
<div style="position:absolute;left:162px;top:414px;width:8px;height:1px;background:#262626"></div>
<div style="position:absolute;left:160px;top:416px;width:12px;height:1px;background:#262626"></div>
<div style="position:absolute;left:162px;top:418px;width:8px;height:1px;background:#262626"></div>
<div style="position:absolute;left:160px;top:420px;width:12px;height:1px;background:#262626"></div>
<div style="position:absolute;left:186px;top:412px;width:12px;height:1px;background:#262626"></div>
<div style="position:absolute;left:189px;top:414px;width:9px;height:1px;background:#262626"></div>
<div style="position:absolute;left:186px;top:416px;width:12px;height:1px;background:#262626"></div>
<div style="position:absolute;left:189px;top:418px;width:9px;height:1px;background:#262626"></div>
<div style="position:absolute;left:186px;top:420px;width:12px;height:1px;background:#262626"></div>
<div style="position:absolute;left:212px;top:412px;width:12px;height:1px;background:#262626"></div>
<div style="position:absolute;left:212px;top:414px;width:12px;height:1px;background:#262626"></div>
<div style="position:absolute;left:212px;top:416px;width:12px;height:1px;background:#262626"></div>
<div style="position:absolute;left:212px;top:418px;width:12px;height:1px;background:#262626"></div>
<div style="position:absolute;left:212px;top:420px;width:12px;height:1px;background:#262626"></div>
<svg style="left:237px;top:408px" width="14" height="16" viewBox="0 0 14 16">
<circle cx="2.8" cy="3.3" r="1.5" fill="none" stroke="#3a7ad0" stroke-width="1"/>
<circle cx="2.8" cy="8.7" r="1.5" fill="none" stroke="#3a7ad0" stroke-width="1"/>
<circle cx="2.8" cy="13.7" r="1.5" fill="none" stroke="#3a7ad0" stroke-width="1"/>
<path d="M7 3.3h6M7 8.5h6M7 13.5h6" stroke="#3a3a3a" stroke-width="1.2"/>
</svg>
<svg style="left:263px;top:408px" width="14" height="17" viewBox="0 0 14 17">
<path d="M2 1.8L3.5 1V5.6M2 5.6h3" fill="none" stroke="#a81010" stroke-width="1.1"/>
<path d="M1.6 7.4Q3 6 4.3 7Q5 8.3 1.6 10.6H5" fill="none" stroke="#a81010" stroke-width="1.1"/>
<path d="M1.6 11.9H4.6L3.1 13.3Q5 13.6 4.6 15.1Q3.4 16.4 1.6 15.6" fill="none" stroke="#a81010" stroke-width="1.1"/>
<path d="M7 3.3h6M7 8.5h6M7 13.5h6" stroke="#3a3a3a" stroke-width="1.2"/>
</svg>
<svg style="left:287px;top:408px" width="17" height="17" viewBox="0 0 17 17">
<path d="M1.5 1v3M1.5 13v3" stroke="#8a8a90" stroke-width="1"/>
<path d="M3 1.5h14M3 3.5h14M11 6.5h6M11 8.5h6M11 10.5h6M3 13.5h14M3 15.5h14" stroke="#1e1e1e" stroke-width="1"/>
<path d="M9.5 5v7.5" stroke="#8a8a90" stroke-width="1"/>
<path d="M1.5 8.5L4.5 5.7v1.6h3v2.4h-3v1.6z" fill="#2a62c8"/>
</svg>
<svg style="left:313px;top:408px" width="17" height="17" viewBox="0 0 17 17">
<path d="M1.5 1v3M1.5 13v3" stroke="#8a8a90" stroke-width="1"/>
<path d="M3 1.5h14M3 3.5h14M11 6.5h6M11 8.5h6M11 10.5h6M3 13.5h14M3 15.5h14" stroke="#1e1e1e" stroke-width="1"/>
<path d="M9.5 5v7.5" stroke="#8a8a90" stroke-width="1"/>
<path d="M8 8.5L5 5.7v1.6H2v2.4h3v1.6z" fill="#2a62c8"/>
</svg>
<div style="position:absolute;left:360px;top:407px;width:130px;height:20px;box-sizing:border-box;background:#fff;border:1px solid #b8bcc2"></div>
<svg style="left:478px;top:415px" width="8" height="4" viewBox="0 0 8 4"><path d="M0 0h7L3.5 4z" fill="#222"/></svg>
<div class="t" style="left:365.10px;top:411px;font-size:11.50px;line-height:13.22px;transform:scaleX(0.8652);transform-origin:0 0;color:#1a1a2a;">Arial</div>
<div style="position:absolute;left:498px;top:407px;width:50px;height:20px;box-sizing:border-box;background:#fff;border:1px solid #b8bcc2"></div>
<svg style="left:536px;top:415px" width="8" height="4" viewBox="0 0 8 4"><path d="M0 0h7L3.5 4z" fill="#222"/></svg>
<div class="t" style="left:504.00px;top:411px;font-size:11.50px;line-height:13.22px;transform:scaleX(0.7812);transform-origin:0 0;color:#1a1a2a;">10</div>
<svg style="left:557px;top:409px" width="16" height="17" viewBox="0 0 16 17">
<text x="7.6" y="11.5" text-anchor="middle" font-family="Liberation Serif" font-weight="bold" font-size="14" fill="#1c3c78">A</text>
<rect x="0.8" y="13" width="14.2" height="3" fill="#000"/>
</svg>
<svg style="left:583px;top:415px" width="6" height="3" viewBox="0 0 6 3"><path d="M0 0h6L3 3z" fill="#222"/></svg>
<svg style="left:599px;top:408px" width="18" height="18" viewBox="0 0 18 18">
<text x="0.5" y="6" font-family="Liberation Sans" font-size="7.5" fill="#1a1a1a">ab</text>
<path d="M6.5 11.5l6.5-8c.8-.9 2-.9 2.6-.2.6.6.5 1.6-.2 2.3l-7 7z" fill="#e02424"/>
<path d="M6.5 11.5l-1.5 2.5 3.4-1.5z" fill="#5a2020"/>
<rect x="2.5" y="14.5" width="13" height="2.2" fill="#f0f0f0" stroke="#9a9a9a" stroke-width="0.7"/>
</svg>
<svg style="left:626px;top:415px" width="6" height="3" viewBox="0 0 6 3"><path d="M0 0h6L3 3z" fill="#222"/></svg>
<svg style="left:643px;top:409px" width="16" height="16" viewBox="0 0 16 16">
<rect x="7" y="0.8" width="6" height="9.5" rx="3" transform="rotate(45 10 5.5)" fill="none" stroke="#a4a4a8" stroke-width="1.4"/>
<rect x="3" y="5.5" width="6" height="9.5" rx="3" transform="rotate(45 6 10.2)" fill="none" stroke="#a4a4a8" stroke-width="1.4"/>
</svg>
<div class="t" style="left:672.60px;top:409px;font-size:14.50px;line-height:16.67px;font-weight:bold;color:#222;font-family:'Liberation Serif',serif;">B</div>
<div class="t" style="left:700.00px;top:409px;font-size:14.50px;line-height:16.67px;color:#222;font-family:'Liberation Serif',serif;font-style:italic;font-weight:bold;">I</div>
<div class="t" style="left:723.80px;top:409px;font-size:14.50px;line-height:16.67px;color:#222;font-family:'Liberation Serif',serif;font-weight:bold;">U</div>
<div style="position:absolute;left:724px;top:423px;width:10px;height:1.5px;background:#222"></div>
<div class="t" style="left:750.30px;top:409px;font-size:14.50px;line-height:16.67px;color:#222;font-family:'Liberation Serif',serif;font-weight:bold;">S</div>
<div style="position:absolute;left:748px;top:416px;width:14px;height:1px;background:#222"></div>
<div class="t" style="left:774.00px;top:410px;font-size:13.00px;line-height:14.95px;color:#222;font-family:'Liberation Serif',serif;font-weight:bold;">X</div>
<div class="t" style="left:785.00px;top:410px;font-size:6.00px;line-height:6.90px;font-weight:bold;color:#b01010;">2</div>
<div class="t" style="left:800.20px;top:410px;font-size:13.00px;line-height:14.95px;color:#222;font-family:'Liberation Serif',serif;font-weight:bold;">X</div>
<div class="t" style="left:810.50px;top:417px;font-size:6.00px;line-height:6.90px;font-weight:bold;color:#b01010;">2</div>
<div class="t" style="left:826.60px;top:407px;font-size:18.00px;line-height:20.70px;color:#1a4a8a;font-family:'Liberation Serif',serif;">A</div>
<svg style="left:825px;top:409px" width="5" height="3" viewBox="0 0 5 3"><path d="M0 3L2.5 0 5 3z" fill="#111"/></svg>
<div style="position:absolute;left:31px;top:433px;width:851px;height:81px;box-sizing:border-box;background:#fff;border-left:1px solid #aeb4bc;border-top:1px solid #aeb4bc"></div>
<div style="position:absolute;left:864px;top:434px;width:17px;height:80px;background:#f7f7f7"></div>
<svg style="left:868px;top:440px" width="8" height="4" viewBox="0 0 8 4"><path d="M0 4h8L4 0z" fill="#c2c2c2"/></svg>
<div style="position:absolute;left:2px;top:155px;width:1px;height:357px;background:#d3d9df"></div>
<div style="position:absolute;left:881px;top:3px;width:1px;height:510px;background:#fff"></div>
<div style="position:absolute;left:0px;top:512px;width:882px;height:1px;background:#fff"></div>
<div style="position:absolute;left:881px;top:12px;width:1px;height:1px;background:#000"></div>
<div style="position:absolute;left:881px;top:21px;width:1px;height:1px;background:#000"></div>
<div style="position:absolute;left:0px;top:0px;width:1px;height:514px;background:#000"></div>
<div style="position:absolute;left:882px;top:0px;width:1px;height:514px;background:#000"></div>
<div style="position:absolute;left:0px;top:513px;width:883px;height:1px;background:#000"></div>
</body></html>
